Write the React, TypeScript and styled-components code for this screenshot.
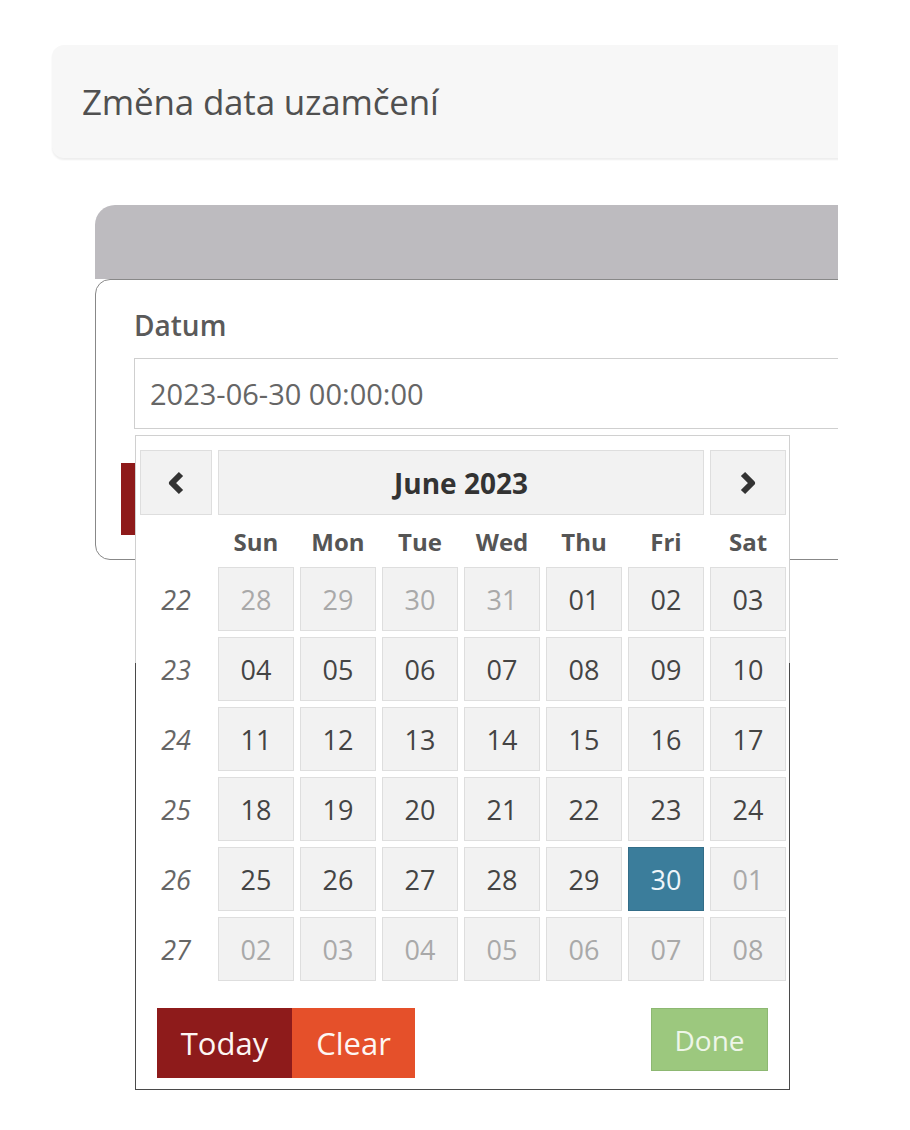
import React from 'react';
import styled, { createGlobalStyle, css } from 'styled-components';

const GlobalStyle = createGlobalStyle`
    body {
        margin: 0;
        background: #ffffff;
        font-family: "Open Sans", "Noto Sans", sans-serif;
        color: #555;
    }
`

const Page = styled.div`
    width: 838px;
    min-height: 1130px;
    overflow: hidden;
    padding-top: 45px;
    box-sizing: border-box;
`

const TitleBar = styled.div`
    margin-left: 52px;
    width: 900px;
    height: 113px;
    box-sizing: border-box;
    padding-left: 30px;
    display: flex;
    align-items: center;
    background: #f7f7f7;
    border-radius: 12px;
    box-shadow: 0 2px 2px rgba(0, 0, 0, 0.07);
    font-size: 35px;
    font-weight: 500;
    color: #505050;
    letter-spacing: -0.2px;
`

const Panel = styled.div`
    margin: 47px 0 0 95px;
    width: 900px;
`

const PanelHead = styled.div`
    height: 74px;
    background: #bdbbbf;
    border-radius: 20px 20px 0 0;
`

const PanelBody = styled.div`
    border: 1px solid #888;
    border-radius: 15px;
    padding: 27px 0 24px 38px;
    background: #fff;
`

const Label = styled.div`
    font-size: 28px;
    font-weight: 600;
    line-height: 36px;
    color: #5a5a5a;
`

const InputGroup = styled.div`
    position: relative;
    margin-top: 15px;
`

const DateInput = styled.div`
    height: 71px;
    box-sizing: border-box;
    border: 1px solid #cfcfcf;
    padding-left: 15px;
    display: flex;
    align-items: center;
    font-size: 29px;
    color: #666;
`

const SaveButton = styled.div`
    margin: 34px 0 0 -13px;
    width: 120px;
    height: 72px;
    background: #8e1a1a;
`

const Popup = styled.div`
    position: absolute;
    top: calc(100% + 6px);
    left: 1px;
    width: 655px;
    box-sizing: border-box;
    padding: 14px 3px 11px 4px;
    background: #fff;
    border: 1px solid;
    border-image: linear-gradient(to bottom, #d0d0d0 0, #d0d0d0 228px, #4a4a4a 228px, #4a4a4a 100%) 1;
`

const Grid = styled.div`
    display: grid;
    grid-template-columns: 72px repeat(7, 76px);
    grid-template-rows: 65px 40px repeat(6, 64px);
    gap: 6px;
`

const NavButton = styled.div<{ $wide?: boolean }>`
    grid-column: ${p => p.$wide ? 'span 6' : 'span 1'};
    display: flex;
    align-items: center;
    justify-content: center;
    background: #f2f2f2;
    border: 1px solid #dedede;
    color: #333;
    font-size: 28px;
    font-weight: 700;
`

const DayName = styled.div`
    display: flex;
    align-items: center;
    justify-content: center;
    font-size: 24px;
    font-weight: 700;
    color: #555;
`

const WeekNo = styled.div`
    display: flex;
    align-items: center;
    justify-content: center;
    font-size: 27px;
    font-style: italic;
    color: #666;
`

const Day = styled.div<{ $muted?: boolean; $active?: boolean }>`
    display: flex;
    align-items: center;
    justify-content: center;
    font-size: 27px;
    background: #f2f2f2;
    border: 1px solid #dedede;
    color: ${p => p.$muted ? '#a9a9a9' : '#444'};

    ${p => p.$active && css`
        background: #3b7d9b;
        border-color: #336d88;
        color: #eef6fa;
    `}
`

const Footer = styled.div`
    margin-top: 27px;
    padding: 0 18px 0 17px;
    display: flex;
    justify-content: space-between;
    align-items: flex-start;
`

const ButtonGroup = styled.div`
    display: flex;
`

const Button = styled.div<{ $bg: string; $w: number; $h: number; $size: number }>`
    width: ${p => p.$w}px;
    height: ${p => p.$h}px;
    box-sizing: border-box;
    display: flex;
    align-items: center;
    justify-content: center;
    background: ${p => p.$bg};
    color: #fdf6f3;
    font-size: ${p => p.$size}px;
`

const DoneButton = styled(Button)`
    border: 1px solid #8db872;
    color: #eef6e8;
`

const Chevron = ({ dir }: { dir: 'left' | 'right' }) => (
    <svg width="22" height="26" viewBox="0 0 22 26">
        <polyline
            points={dir === 'left' ? '16,4 7,13 16,22' : '6,4 15,13 6,22'}
            fill="none"
            stroke="#333"
            strokeWidth="6"
            strokeLinejoin="round"
        />
    </svg>
)

const dayNames = ['Sun', 'Mon', 'Tue', 'Wed', 'Thu', 'Fri', 'Sat'];

type Cell = { n: number; muted?: boolean };

const buildWeeks = (): { no: number; days: Cell[] }[] => {
    const cells: Cell[] = [];
    for (let d = 28; d <= 31; d++) cells.push({ n: d, muted: true });
    for (let d = 1; d <= 30; d++) cells.push({ n: d });
    for (let d = 1; d <= 8; d++) cells.push({ n: d, muted: true });
    const weeks = [];
    for (let w = 0; w < 6; w++) {
        weeks.push({ no: 22 + w, days: cells.slice(w * 7, w * 7 + 7) });
    }
    return weeks;
}

const pad = (n: number) => String(n).padStart(2, '0');

const DatePicker = () => {
    const weeks = buildWeeks();

    return (
        <Popup>
            <Grid>
                <NavButton><Chevron dir="left" /></NavButton>
                <NavButton $wide>June 2023</NavButton>
                <NavButton><Chevron dir="right" /></NavButton>

                <div />
                {dayNames.map(name => <DayName key={name}>{name}</DayName>)}

                {weeks.map(week => (
                    <React.Fragment key={week.no}>
                        <WeekNo>{week.no}</WeekNo>
                        {week.days.map((d, i) => (
                            <Day key={i} $muted={d.muted} $active={!d.muted && d.n === 30}>{pad(d.n)}</Day>
                        ))}
                    </React.Fragment>
                ))}
            </Grid>
            <Footer>
                <ButtonGroup>
                    <Button $bg="#8e1b1b" $w={135} $h={70} $size={31}>Today</Button>
                    <Button $bg="#e5502a" $w={123} $h={70} $size={31}>Clear</Button>
                </ButtonGroup>
                <DoneButton $bg="#9cc87e" $w={117} $h={63} $size={28}>Done</DoneButton>
            </Footer>
        </Popup>
    )
}

const App = () => {
    return (
        <>
            <GlobalStyle />
            <Page>
                <TitleBar>Změna data uzamčení</TitleBar>
                <Panel>
                    <PanelHead />
                    <PanelBody>
                        <Label>Datum</Label>
                        <InputGroup>
                            <DateInput>2023-06-30 00:00:00</DateInput>
                            <DatePicker />
                        </InputGroup>
                        <SaveButton />
                    </PanelBody>
                </Panel>
            </Page>
        </>
    )
}

export default App
